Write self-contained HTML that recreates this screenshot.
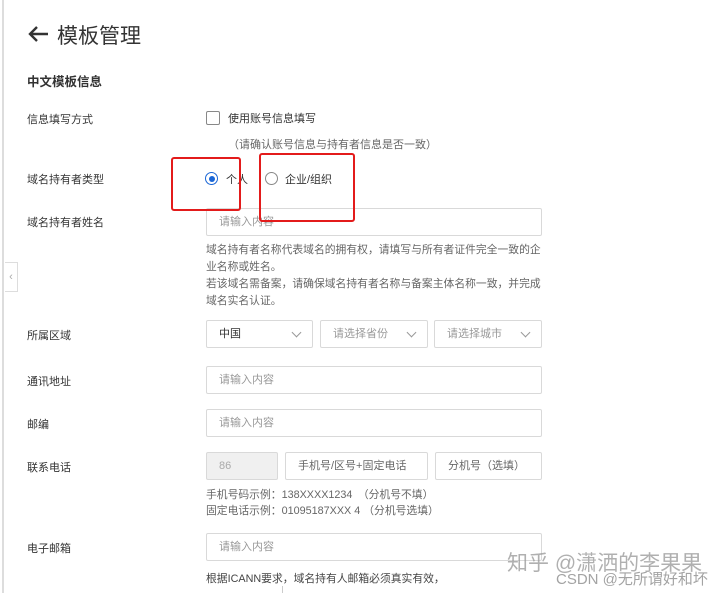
<!DOCTYPE html>
<html><head><meta charset="utf-8"><style>
*{margin:0;padding:0;box-sizing:border-box}
body{width:720px;height:593px;background:#fff;position:relative;overflow:hidden;font-family:"Liberation Sans","Noto Sans CJK SC",sans-serif;color:#333}
.a{position:absolute;white-space:nowrap}
.l{font-size:11px;color:#333;left:27px}
.in{position:absolute;border:1px solid #d9d9d9;background:#fff;height:28px;font-size:11px;color:#999;padding-left:12px;line-height:26px;border-radius:2px}
.sel::after{content:"";position:absolute;right:12px;top:8px;width:6px;height:6px;border-right:1px solid #999;border-bottom:1px solid #999;transform:rotate(45deg)}
.h{font-size:10.8px;color:#666;left:206px}
.red{position:absolute;border:2.5px solid #e31b1b;border-radius:3px}
</style></head><body>
<div class="a" style="left:2px;top:0;width:2px;height:593px;background:#ddd"></div>
<div class="a" style="left:5px;top:262px;width:13px;height:30px;border:1px solid #ddd;border-left:none;background:#fff;font-size:11px;color:#aaa;line-height:28px;text-align:center">‹</div>
<svg class="a" style="left:27px;top:25px" width="22" height="18" viewBox="0 0 22 18"><path d="M21 9H3M10 2L3 9l7 7" stroke="#333" stroke-width="2.4" fill="none"/></svg>
<div class="a" style="left:57px;top:20px;font-size:21px;color:#333">模板管理</div>
<div class="a" style="left:27px;top:71px;font-size:12.5px;font-weight:bold;color:#333">中文模板信息</div>
<div class="a l" style="top:111px">信息填写方式</div>
<div class="a" style="left:206px;top:111px;width:14px;height:14px;border:1px solid #888;border-radius:2px"></div>
<div class="a" style="left:228px;top:110px;font-size:11px;color:#333">使用账号信息填写</div>
<div class="a" style="left:228px;top:136px;font-size:11px;color:#666">（请确认账号信息与持有者信息是否一致）</div>
<div class="a l" style="top:171px">域名持有者类型</div>
<div class="a" style="left:205px;top:172px;width:13px;height:13px;border:1px solid #1a66d6;border-radius:50%"><div style="margin:2.5px;width:6px;height:6px;border-radius:50%;background:#1a66d6"></div></div>
<div class="a" style="left:226px;top:171px;font-size:11px;color:#333">个人</div>
<div class="a" style="left:265px;top:172px;width:13px;height:13px;border:1px solid #888;border-radius:50%"></div>
<div class="a" style="left:285px;top:171px;font-size:11px;color:#333">企业/组织</div>
<div class="a l" style="top:214px">域名持有者姓名</div>
<div class="in" style="left:206px;top:208px;width:336px">请输入内容</div>
<div class="red" style="left:171px;top:157px;width:70px;height:54px"></div>
<div class="red" style="left:259px;top:153px;width:96px;height:69px"></div>
<div class="a h" style="top:242px;line-height:17px">域名持有者名称代表域名的拥有权，请填写与所有者证件完全一致的企<br>业名称或姓名。<br>若该域名需备案，请确保域名持有者名称与备案主体名称一致，并完成<br>域名实名认证。</div>
<div class="a l" style="top:327px">所属区域</div>
<div class="in sel" style="left:206px;top:320px;width:107px;color:#333">中国</div>
<div class="in sel" style="left:320px;top:320px;width:108px">请选择省份</div>
<div class="in sel" style="left:434px;top:320px;width:108px">请选择城市</div>
<div class="a l" style="top:373px">通讯地址</div>
<div class="in" style="left:206px;top:366px;width:336px">请输入内容</div>
<div class="a l" style="top:416px">邮编</div>
<div class="in" style="left:206px;top:409px;width:336px">请输入内容</div>
<div class="a l" style="top:459px">联系电话</div>
<div class="in" style="left:206px;top:452px;width:72px;background:#f0f0f0;color:#aaa">86</div>
<div class="in" style="left:285px;top:452px;width:143px;color:#666">手机号/区号+固定电话</div>
<div class="in" style="left:435px;top:452px;width:107px;color:#666">分机号（选填）</div>
<div class="a h" style="top:487px;line-height:16px">手机号码示例：138XXXX1234　（分机号不填）<br>固定电话示例：01095187XXX 4 （分机号选填）</div>
<div class="a l" style="top:540px">电子邮箱</div>
<div class="in" style="left:206px;top:533px;width:336px">请输入内容</div>
<div class="a h" style="top:570px;color:#444">根据ICANN要求，域名持有人邮箱必须真实有效，</div>
<div class="a" style="left:282px;top:586px;width:1px;height:7px;background:#ccc"></div>
<div class="a" style="left:507px;top:547px;font-size:21px;color:rgba(150,150,150,.75)">知乎 @潇洒的李果果</div>
<div class="a" style="left:556px;top:568px;font-size:15px;color:rgba(140,140,140,.8)">CSDN @无所谓好和坏</div>
</body></html>
